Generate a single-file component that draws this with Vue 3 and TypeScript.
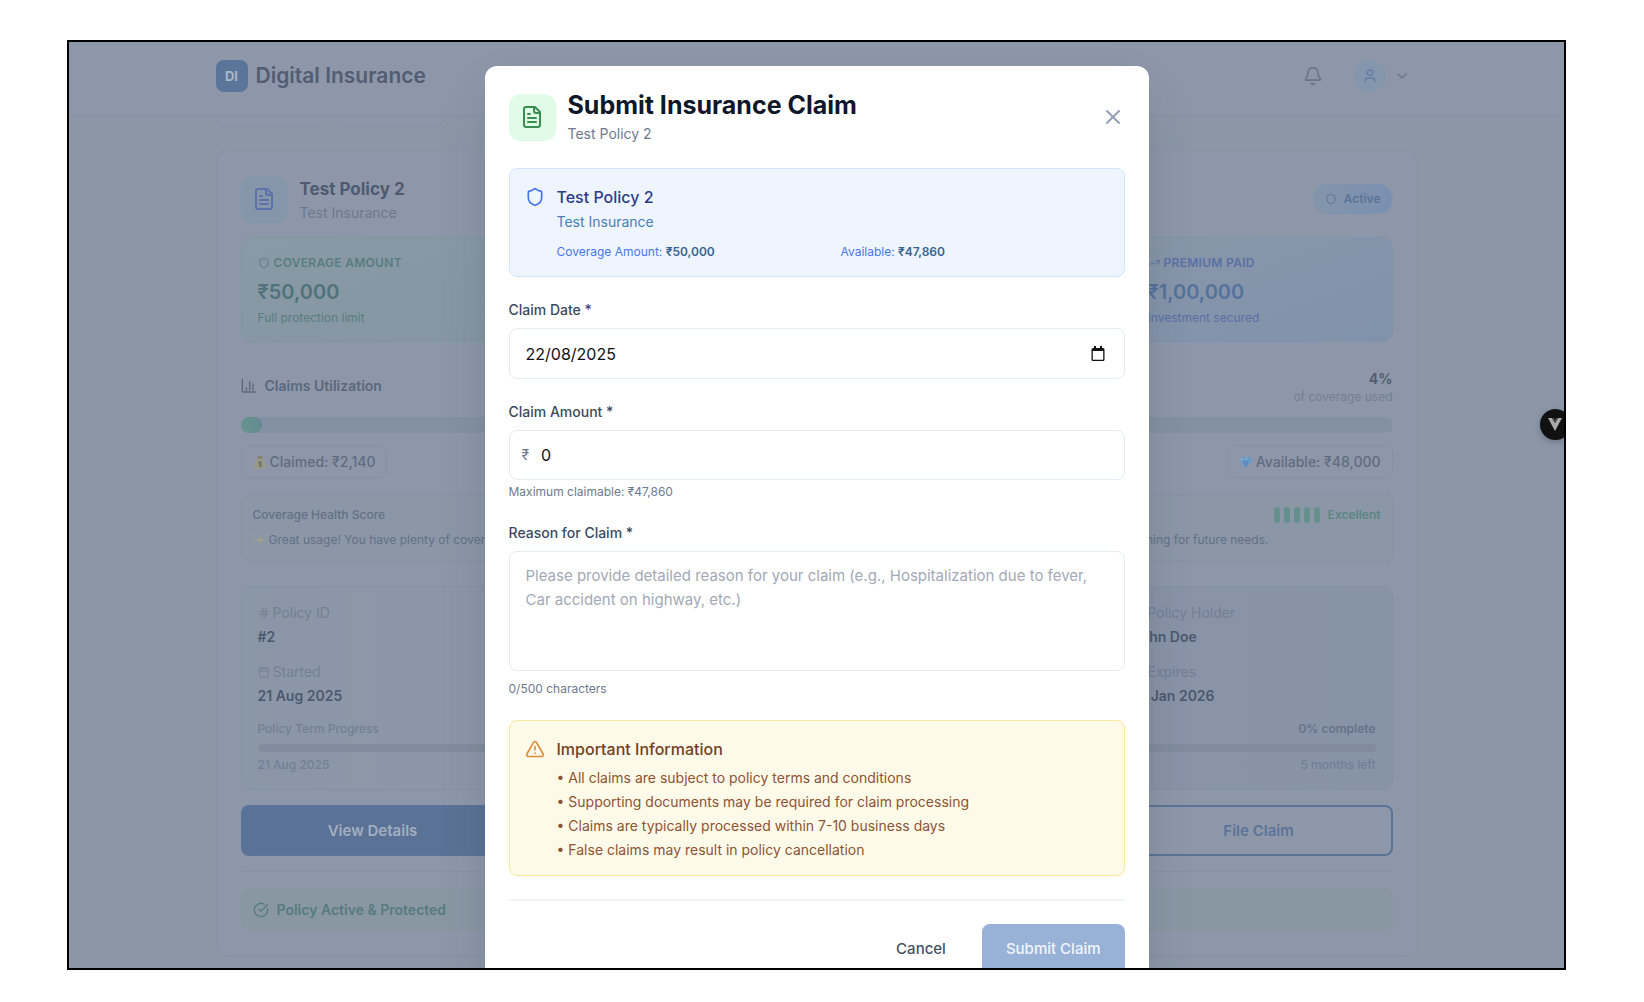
<script setup lang="ts">
import { ref } from 'vue'

const claimDate = ref('22/08/2025')
const claimAmount = ref('0')
const reason = ref('')

const notes: string[] = [
  'All claims are subject to policy terms and conditions',
  'Supporting documents may be required for claim processing',
  'Claims are typically processed within 7-10 business days',
  'False claims may result in policy cancellation',
]
</script>

<template>
  <div class="page">
    <div class="frame">
      <header class="topbar">
        <div class="container topbar-row">
          <a class="brand" href="#">
            <span class="logo">DI</span>
            <span class="brand-name">Digital Insurance</span>
          </a>
          <div class="account">
            <button class="plain" type="button" aria-label="Notifications">
              <svg width="20" height="20" viewBox="0 0 24 24" class="ico bell"><path d="M10.268 21a2 2 0 0 0 3.464 0" /><path d="M3.262 15.326A1 1 0 0 0 4 17h16a1 1 0 0 0 .74-1.673C19.41 13.956 18 12.499 18 8A6 6 0 0 0 6 8c0 4.499-1.411 5.956-2.738 7.326" /></svg>
            </button>
            <button class="plain profile" type="button" aria-label="Account">
              <span class="avatar">
                <svg width="16" height="16" viewBox="0 0 24 24" class="ico"><circle cx="12" cy="7" r="4" /><path d="M19 21v-2a4 4 0 0 0-4-4H9a4 4 0 0 0-4 4v2" /></svg>
              </span>
              <svg width="16" height="16" viewBox="0 0 24 24" class="ico"><path d="m6 9 6 6 6-6" /></svg>
            </button>
          </div>
        </div>
      </header>

      <main class="container">
        <div class="tabs"><span class="tab first"></span><span class="tab"></span></div>

        <section class="card">
          <div class="card-head">
            <span class="tile">
              <svg width="24" height="24" viewBox="0 0 24 24" class="ico"><path d="M15 2H6a2 2 0 0 0-2 2v16a2 2 0 0 0 2 2h12a2 2 0 0 0 2-2V7Z" /><path d="M14 2v4a2 2 0 0 0 2 2h4" /><path d="M10 9H8M16 13H8M16 17H8" /></svg>
            </span>
            <div class="names">
              <h3>Test Policy 2</h3>
              <p>Test Insurance</p>
            </div>
            <span class="badge">
              <svg width="12" height="12" viewBox="0 0 24 24" class="ico"><path d="M20 13c0 5-3.5 7.5-7.66 8.95a1 1 0 0 1-.67-.01C7.5 20.5 4 18 4 13V6a1 1 0 0 1 1-1c2 0 4.500-1.200 6.240-2.720a1.170 1.170 0 0 1 1.520 0C14.510 3.810 17 5 19 5a1 1 0 0 1 1 1z" /></svg>
              Active
            </span>
          </div>

          <div class="stats">
            <div class="stat green">
              <h4>
                <svg width="12" height="12" viewBox="0 0 24 24" class="ico"><path d="M20 13c0 5-3.5 7.5-7.66 8.95a1 1 0 0 1-.67-.01C7.5 20.5 4 18 4 13V6a1 1 0 0 1 1-1c2 0 4.500-1.200 6.240-2.720a1.170 1.170 0 0 1 1.520 0C14.510 3.810 17 5 19 5a1 1 0 0 1 1 1z" /></svg>
                COVERAGE AMOUNT
              </h4>
              <strong>₹50,000</strong>
              <p>Full protection limit</p>
            </div>
            <div class="stat blue">
              <h4>
                <svg width="12" height="12" viewBox="0 0 24 24" class="ico"><path d="M22 7 13.500 15.500 8.500 10.500 2 17" /><path d="M16 7h6v6" /></svg>
                PREMIUM PAID
              </h4>
              <strong>₹1,00,000</strong>
              <p>Investment secured</p>
            </div>
          </div>

          <div class="usage-head">
            <div class="usage-title">
              <svg width="16" height="16" viewBox="0 0 24 24" class="ico"><path d="M2 2v18a1 1 0 0 0 1 1h19" /><path d="M18 18V9M13 18V5M8 18v-3" /></svg>
              Claims Utilization
            </div>
            <div class="usage-value">
              <strong>4%</strong>
              <span>of coverage used</span>
            </div>
          </div>
          <div class="track"><div class="fill" :style="{ width: '21px' }"></div></div>
          <div class="chips">
            <span class="chip">
              <svg width="14" height="14" viewBox="0 0 14 14"><path d="M4 1h6L9 4H5z" fill="#85836f" /><path d="M5 4h4c2 2 4 5 3.500 8-.2 1-1 1.500-2 1.500h-7c-1 0-1.800-.5-2-1.500C1 9 3 6 5 4z" fill="#9a9a80" /><path d="M8.800 7.500C8 6.600 5.700 6.800 5.700 8.200c0 1.500 3.100.7 3.100 2.200 0 1.300-2.400 1.400-3.300.4M7.200 6v6" fill="none" stroke="#5d6a70" /></svg>
              Claimed: ₹2,140
            </span>
            <span class="chip">
              <svg width="14" height="14" viewBox="0 0 14 14"><path d="M3 2h8l3 3.500L7 13 0 5.500z" fill="#6b99c4" /><path d="M3 2 0 5.500h4z" fill="#85aac8" /><path d="M7 2 4 5.500h6z" fill="#7fa9d0" /><path d="M4 5.500h6L7 13z" fill="#5a8cc0" /></svg>
              Available: ₹48,000
            </span>
          </div>

          <div class="health">
            <div class="health-row">
              <span>Coverage Health Score</span>
              <span class="score">
                <i v-for="n in 5" :key="n"></i>
                <b>Excellent</b>
              </span>
            </div>
            <div class="health-note">
              <span class="sparkle">
                <svg width="12" height="12" viewBox="0 0 12 12" fill="#a1a18a"><path d="M7 1l1.100 3.900L12 6 8.100 7.100 7 11 5.900 7.100 2 6l3.900-1.100z" /><path d="M2 0l.5 1.500L4 2l-1.500.5L2 4l-.5-1.500L0 2l1.500-.5zM2.500 8l.4 1.600 1.600.4-1.600.4-.4 1.600-.4-1.600L.5 10l1.600-.4z" /></svg>
                Great usage! You have plenty of coverage
              </span>
              <span>remaining for future needs.</span>
            </div>
          </div>

          <div class="details">
            <div class="facts">
              <div class="fact">
                <span><svg width="12" height="12" viewBox="0 0 24 24" class="ico"><path d="M4 9h16M4 15h16M10 3 8 21M16 3l-2 18" /></svg>Policy ID</span>
                <strong>#2</strong>
              </div>
              <div class="fact">
                <span><svg width="12" height="12" viewBox="0 0 24 24" class="ico"><circle cx="12" cy="7" r="4" /><path d="M19 21v-2a4 4 0 0 0-4-4H9a4 4 0 0 0-4 4v2" /></svg>Policy Holder</span>
                <strong>John Doe</strong>
              </div>
              <div class="fact">
                <span><svg width="12" height="12" viewBox="0 0 24 24" class="ico"><rect x="3" y="4" width="18" height="18" rx="2" /><path d="M8 2v4M16 2v4M3 10h18" /></svg>Started</span>
                <strong>21 Aug 2025</strong>
              </div>
              <div class="fact">
                <span><svg width="12" height="12" viewBox="0 0 24 24" class="ico"><rect x="3" y="4" width="18" height="18" rx="2" /><path d="M8 2v4M16 2v4M3 10h18" /></svg>Expires</span>
                <strong>21 Jan 2026</strong>
              </div>
            </div>
            <div class="term">
              <span>Policy Term Progress</span>
              <b>0% complete</b>
            </div>
            <div class="term-track"></div>
            <div class="term"><span>21 Aug 2025</span><span>5 months left</span></div>
          </div>

          <div class="card-actions">
            <button class="view" type="button">View Details</button>
            <button class="file" type="button">File Claim</button>
          </div>

          <div class="status">
            <svg width="16" height="16" viewBox="0 0 24 24" class="ico"><path d="M21.801 10A10 10 0 1 1 17 3.335" /><path d="m9 11 3 3L22 4" /></svg>
            Policy Active &amp; Protected
          </div>
        </section>
      </main>

      <div class="fab" aria-hidden="true">
        <svg width="16" height="15" viewBox="0 0 16 15"><path d="M1 1h4l3 5 3-5h4L8 14z" fill="#a9a9a9" /><path d="M5 1h2l1 2 1-2h2L8 6z" fill="#4a4a4a" /></svg>
      </div>

      <div class="overlay">
        <form class="modal" role="dialog" aria-labelledby="modal-title" @submit.prevent>
          <div class="modal-head">
            <span class="tile mint">
              <svg width="24" height="24" viewBox="0 0 24 24" class="ico"><path d="M15 2H6a2 2 0 0 0-2 2v16a2 2 0 0 0 2 2h12a2 2 0 0 0 2-2V7Z" /><path d="M14 2v4a2 2 0 0 0 2 2h4" /><path d="M10 9H8M16 13H8M16 17H8" /></svg>
            </span>
            <div class="modal-names">
              <h2 id="modal-title">Submit Insurance Claim</h2>
              <p>Test Policy 2</p>
            </div>
            <button class="plain close" type="button" aria-label="Close">
              <svg width="24" height="24" viewBox="0 0 24 24" class="ico"><path d="M18 6 6 18M6 6l12 12" /></svg>
            </button>
          </div>

          <div class="policy">
            <svg width="20" height="20" viewBox="0 0 24 24" class="ico"><path d="M20 13c0 5-3.5 7.5-7.66 8.95a1 1 0 0 1-.67-.01C7.5 20.5 4 18 4 13V6a1 1 0 0 1 1-1c2 0 4.500-1.200 6.240-2.720a1.170 1.170 0 0 1 1.520 0C14.510 3.810 17 5 19 5a1 1 0 0 1 1 1z" /></svg>
            <div class="policy-body">
              <h3>Test Policy 2</h3>
              <p>Test Insurance</p>
              <div class="policy-sums">
                <span>Coverage Amount: <b>₹50,000</b></span>
                <span>Available: <b>₹47,860</b></span>
              </div>
            </div>
          </div>

          <div class="field">
            <label for="claim-date">Claim Date *</label>
            <div class="control">
              <input id="claim-date" v-model="claimDate" type="text" />
              <svg width="14" height="16" viewBox="0 0 14 16"><path fill="#111" fill-rule="evenodd" d="M3 0h2v2h4V0h2v2h1a1.500 1.500 0 0 1 1.500 1.500v10A1.500 1.500 0 0 1 12 15H2a1.500 1.500 0 0 1-1.500-1.500v-10A1.500 1.500 0 0 1 2 2h1zM1.800 5v8.700h10.400V5z" /></svg>
            </div>
          </div>

          <div class="field amount">
            <label for="claim-amount">Claim Amount *</label>
            <div class="control">
              <span class="currency">₹</span>
              <input id="claim-amount" v-model="claimAmount" type="text" inputmode="numeric" />
            </div>
            <p class="hint">Maximum claimable: ₹47,860</p>
          </div>

          <div class="field reason">
            <label for="claim-reason">Reason for Claim *</label>
            <textarea id="claim-reason" v-model="reason" placeholder="Please provide detailed reason for your claim (e.g., Hospitalization due to fever, Car accident on highway, etc.)"></textarea>
            <p class="hint">{{ reason.length }}/500 characters</p>
          </div>

          <div class="notice">
            <svg width="20" height="20" viewBox="0 0 24 24" class="ico"><path d="m21.730 18-8-14a2 2 0 0 0-3.480 0l-8 14A2 2 0 0 0 4 21h16a2 2 0 0 0 1.730-3" /><path d="M12 9v4M12 17h.01" /></svg>
            <div>
              <h3>Important Information</h3>
              <ul>
                <li v-for="note in notes" :key="note">• {{ note }}</li>
              </ul>
            </div>
          </div>

          <div class="modal-actions">
            <button class="plain cancel" type="button">Cancel</button>
            <button class="submit" type="submit">Submit Claim</button>
          </div>
        </form>
      </div>
    </div>
  </div>
</template>

<style>
body {
  margin: 0;
  background: #fff;
}
</style>

<style scoped>
* {
  box-sizing: border-box;
}
h2,
h3,
h4,
p,
ul {
  margin: 0;
  padding: 0;
}
.page {
  padding: 40px 78px 32px 67px;
  font-family: Inter, 'Liberation Sans', sans-serif;
  font-size: 14px;
  line-height: 20px;
}
.frame {
  position: relative;
  height: calc(100vh - 72px);
  min-height: 400px;
  overflow: hidden;
  border: 2px solid #000;
  background: #8b97a7;
}
.ico {
  display: block;
  flex: none;
  fill: none;
  stroke: currentColor;
  stroke-width: 2;
  stroke-linecap: round;
  stroke-linejoin: round;
}
button,
input,
textarea {
  font: inherit;
}
.plain {
  padding: 0;
  border: 0;
  background: none;
  color: inherit;
}
.container {
  max-width: 1202px;
  margin: 0 auto;
}

/* Top bar */
.topbar {
  height: 74px;
  padding-top: 18px;
  border-bottom: 1px solid #8793a5;
  background: #8e97a9;
}
.topbar-row {
  display: flex;
  align-items: center;
  justify-content: space-between;
}
.brand {
  display: flex;
  align-items: center;
  gap: 8px;
  text-decoration: none;
}
.logo {
  width: 32px;
  height: 32px;
  border-radius: 8px;
  background: #5a7599;
  color: #a9b5c8;
  font-size: 13px;
  font-weight: 700;
  line-height: 32px;
  text-align: center;
}
.brand-name {
  color: #525d73;
  font-size: 21px;
  font-weight: 600;
}
.account {
  display: flex;
  align-items: center;
  gap: 31px;
  padding-right: 8px;
  color: #66758b;
}
.profile {
  display: flex;
  align-items: center;
  gap: 8px;
}
.avatar {
  display: grid;
  place-items: center;
  width: 32px;
  height: 32px;
  border-radius: 50%;
  background: #8496ac;
  color: #667ca8;
}
.tabs {
  display: flex;
  gap: 16px;
}
.tab {
  width: 104px;
  height: 11px;
  border: 1px solid #8692a4;
  border-top: 0;
  border-radius: 0 0 8px 8px;
  background: #8e97a9;
}
.tab.first {
  width: 107px;
}

/* Policy card */
.card {
  margin-top: 23px;
  padding: 24px;
  border: 1px solid #8592a4;
  border-radius: 12px;
  background: #8e97a9;
}
.card-head {
  display: flex;
  align-items: center;
  gap: 12px;
}
.tile {
  display: grid;
  flex: none;
  place-items: center;
  width: 47px;
  height: 47px;
  border-radius: 12px;
  background: #8596aa;
  color: #5b72ab;
}
.names {
  flex: 1;
}
.names h3 {
  color: #4e5a70;
  font-size: 17px;
  font-weight: 700;
  line-height: 28px;
}
.names p {
  color: #6b7890;
}
.badge {
  display: flex;
  align-items: center;
  gap: 7px;
  height: 30px;
  padding: 0 11px;
  border: 1px solid #7b92b1;
  border-radius: 15px;
  background: linear-gradient(90deg, #8495aa, #7b8fb0);
  color: #5a7597;
  font-size: 12px;
  font-weight: 600;
}
.stats {
  display: grid;
  grid-template-columns: 1fr 262px;
  gap: 16px;
  margin-top: 14px;
}
.stat {
  height: 105px;
  padding: 16px;
  border: 1px solid #7f98a0;
  border-radius: 12px;
  font-size: 12px;
}
.stat h4 {
  display: flex;
  align-items: center;
  gap: 4px;
  font-size: 12px;
  font-weight: 600;
  line-height: 18px;
  letter-spacing: 0.025em;
}
.stat strong {
  display: block;
  margin-top: 6px;
  font-size: 20px;
  font-weight: 600;
  line-height: 28px;
}
.stat p {
  margin-top: 4px;
  line-height: 16px;
}
.green {
  background: linear-gradient(160deg, #8999a6, #81949f);
  color: #577d80;
}
.green strong {
  color: #507379;
}
.blue {
  border-color: #7e93ac;
  background: linear-gradient(160deg, #8996a9, #8092aa);
  color: #5a70a5;
}
.blue strong {
  color: #55729a;
}
.usage-head {
  display: flex;
  align-items: center;
  justify-content: space-between;
  margin-top: 25px;
  color: #5b687d;
}
.usage-title {
  display: flex;
  align-items: center;
  gap: 8px;
  font-weight: 600;
}
.usage-value {
  padding-top: 2px;
  text-align: right;
}
.usage-value strong {
  display: block;
  color: #525e73;
  font-weight: 700;
}
.usage-value span {
  display: block;
  color: #718096;
  font-size: 12px;
  line-height: 16px;
}
.track {
  height: 16px;
  margin-top: 12px;
  border-radius: 8px;
  background: #8490a3;
}
.fill {
  height: 16px;
  border-radius: 8px;
  background: linear-gradient(90deg, #67958f, #658a91);
}
.chips {
  display: flex;
  justify-content: space-between;
  margin-top: 12px;
}
.chip {
  display: flex;
  align-items: center;
  gap: 3px;
  height: 33px;
  padding: 0 11px;
  border: 1px solid #8692a4;
  border-radius: 8px;
  color: #5f6c81;
  font-weight: 500;
}
.health {
  height: 68px;
  margin-top: 16px;
  padding: 12px 11px;
  border: 1px solid #8592a3;
  border-radius: 8px;
  background: #8b97a7;
  color: #637086;
  font-size: 12px;
  line-height: 16px;
}
.health-row,
.health-note,
.score,
.sparkle {
  display: flex;
  align-items: center;
  justify-content: space-between;
}
.health-row {
  font-weight: 500;
}
.health-note {
  margin-top: 9px;
  padding-right: 112px;
}
.score {
  gap: 4px;
  color: #5c8585;
}
.score i {
  width: 6px;
  height: 16px;
  border-radius: 3px;
  background: #638f8c;
}
.score b {
  margin-left: 4px;
  font-weight: 600;
}
.sparkle {
  gap: 4px;
}
.details {
  margin-top: 24px;
  padding: 16px;
  border: 1px solid #8592a4;
  border-radius: 12px;
  background: linear-gradient(90deg, #8a97a7, #8e96a9 25%, #8994a9 70%, #8793a6);
}
.facts {
  display: grid;
  grid-template-columns: 1fr 243px;
  row-gap: 15px;
}
.fact span {
  display: flex;
  align-items: center;
  gap: 3px;
  color: #738095;
}
.fact strong {
  display: block;
  margin-top: 4px;
  color: #4d586e;
  font-weight: 600;
}
.term {
  display: flex;
  justify-content: space-between;
  color: #718096;
  font-size: 12px;
  font-weight: 500;
  line-height: 16px;
}
.facts + .term {
  margin-top: 15px;
}
.term b {
  color: #66748a;
  font-weight: 600;
}
.term-track {
  height: 8px;
  margin: 7px 0 5px;
  border-radius: 4px;
  background: #818d9e;
}
.card-actions {
  display: flex;
  justify-content: space-between;
  margin-top: 15px;
  padding-bottom: 15px;
  border-bottom: 1px solid #8692a5;
}
.card-actions button {
  width: 264px;
  height: 51px;
  border: 2px solid #5a7398;
  border-radius: 8px;
  background: #5a7295;
  color: #a2aec0;
  font-size: 15px;
  font-weight: 600;
}
.card-actions .file {
  width: 268px;
  background: transparent;
  color: #5a7499;
}
.status {
  display: flex;
  align-items: center;
  gap: 8px;
  height: 43px;
  margin-top: 16px;
  padding: 0 12px;
  border-radius: 8px;
  background: #8997a3;
  color: #577b7e;
  font-weight: 600;
}

/* Floating toolbar handle at the right edge */
.fab {
  position: absolute;
  top: 367px;
  right: -7px;
  width: 31px;
  height: 31px;
  padding: 8px 7px;
  border-radius: 50%;
  background: #111;
  box-shadow: 0 2px 6px rgba(30, 40, 60, 0.3);
}

/* Claim dialog */
.overlay {
  position: absolute;
  inset: 0;
  display: flex;
  align-items: flex-start;
  justify-content: center;
  padding-top: 24px;
  pointer-events: none;
}
.modal {
  width: 664px;
  padding: 24px;
  border-radius: 12px;
  background: #fff;
  box-shadow: 0 24px 48px -12px rgba(50, 60, 80, 0.3);
  pointer-events: auto;
}
.modal-head {
  display: flex;
  align-items: center;
  gap: 12px;
}
.mint {
  background: #e0fbe8;
  color: #3c8d50;
}
.modal-names {
  flex: 1;
}
.modal-names h2 {
  color: #0f172a;
  font-size: 25px;
  font-weight: 700;
  line-height: 30px;
}
.modal-names p {
  margin-top: 4px;
  color: #6d7a8e;
}
.close {
  color: #94a0b8;
}
.policy,
.notice {
  display: flex;
  gap: 12px;
  padding: 16px 15px;
  border: 1px solid #d3e5fd;
  border-radius: 8px;
  background: #eff5fe;
}
.policy {
  height: 109px;
  margin-top: 24px;
}
.policy > svg,
.notice > svg {
  margin-top: 2px;
  color: #4272f0;
}
.policy-body {
  flex: 1;
}
.policy h3,
.notice h3 {
  color: #2a3d8c;
  font-size: 16px;
  font-weight: 500;
  line-height: 24px;
}
.policy p {
  margin-top: 3px;
  color: #4580b8;
}
.policy-sums {
  display: grid;
  grid-template-columns: 1fr 1fr;
  gap: 16px;
  margin-top: 12px;
  color: #4a76ee;
  font-size: 12px;
  line-height: 16px;
}
.policy b {
  color: #356594;
  font-weight: 600;
}
.field {
  margin-top: 23px;
}
.field label {
  display: block;
  color: #3c495e;
  font-weight: 500;
}
.control,
.field textarea {
  display: flex;
  align-items: center;
  width: 100%;
  height: 51px;
  margin-top: 8px;
  padding: 0 19px 0 16px;
  border: 1px solid #e6eaf2;
  border-radius: 8px;
  background: #fff;
}
.control input {
  flex: 1;
  min-width: 0;
  padding: 0;
  border: 0;
  outline: 0;
  background: none;
  color: #111;
  font-size: 16px;
}
.amount .control {
  height: 50px;
  padding-left: 12px;
  gap: 12px;
}
.currency {
  color: #6d7a8e;
}
.hint {
  margin-top: 4px;
  color: #6d7a8e;
  font-size: 12px;
  line-height: 16px;
}
.field textarea {
  height: 120px;
  padding: 12px 16px;
  outline: 0;
  resize: none;
  color: #111;
  font-size: 15px;
  line-height: 24px;
}
.field textarea::placeholder {
  color: #a2a9b6;
}
.reason .hint {
  margin-top: 10px;
}
.notice {
  margin-top: 23px;
  padding-bottom: 13px;
  border-color: #f9e99a;
  background: #fefaea;
}
.notice > svg {
  color: #dd8f3c;
}
.notice h3 {
  color: #744020;
}
.notice ul {
  margin-top: 5px;
  color: #8f5330;
  list-style: none;
}
.notice li {
  line-height: 24px;
}
.modal-actions {
  display: flex;
  justify-content: flex-end;
  gap: 12px;
  margin-top: 23px;
  padding-top: 23px;
  border-top: 2px solid #f2f5f6;
}
.modal-actions button {
  height: 50px;
  padding: 0 24px;
  border-radius: 8px;
  font-size: 15px;
  font-weight: 500;
}
.cancel {
  color: #475266;
}
.submit {
  border: 0;
  background: #98b1d6;
  color: #f1f5fb;
}
</style>
